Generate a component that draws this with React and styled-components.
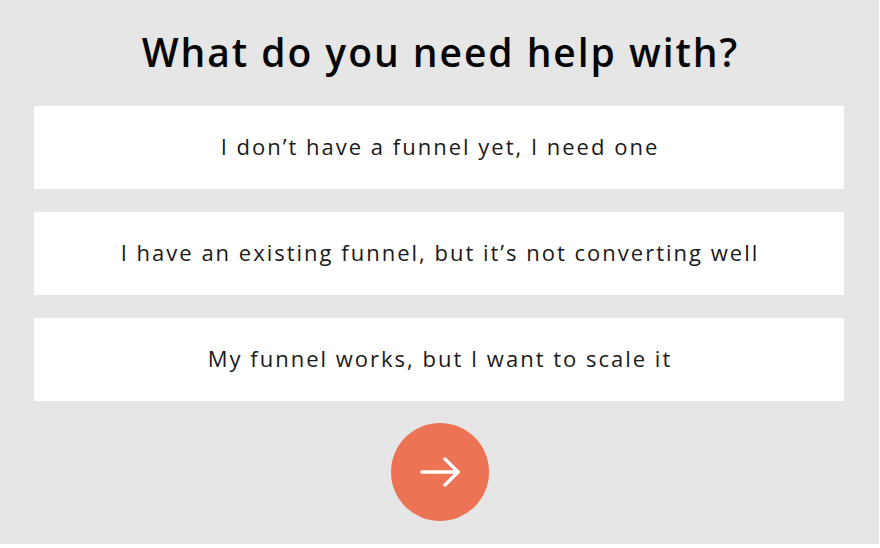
import React from "react";
import styled, { createGlobalStyle } from "styled-components";

const Global = createGlobalStyle`
  html, body { margin: 0; padding: 0; background: #ffffff; }
  * { box-sizing: border-box; }
`;

const Panel = styled.div`
  width: 879px;
  height: 544px;
  background: #e6e6e6;
  padding: 27px 35px 0 34px;
  display: flex;
  flex-direction: column;
  align-items: stretch;
  font-family: "Open Sans", "Noto Sans", sans-serif;
  color: #111111;
`;

const Title = styled.h1`
  margin: 0 0 29px;
  height: 50px;
  line-height: 50px;
  text-align: center;
  font-size: 39px;
  font-weight: 600;
  letter-spacing: 1.95px;
  padding-left: 3px;
  color: #050505;
`;

const Options = styled.div`
  display: flex;
  flex-direction: column;
  gap: 23px;
`;

const Option = styled.button`
  height: 83px;
  border: none;
  background: #ffffff;
  font-family: inherit;
  font-size: 22px;
  font-weight: 400;
  letter-spacing: 2px;
  color: #1a1a1a;
  cursor: pointer;
  display: flex;
  align-items: center;
  justify-content: center;
  padding: 0 0 3px 2px;
`;

const NextButton = styled.button`
  align-self: center;
  margin-top: 22px;
  margin-left: 1px;
  width: 98px;
  height: 98px;
  border-radius: 50%;
  border: none;
  background: #ec7353;
  display: flex;
  align-items: center;
  justify-content: center;
  cursor: pointer;
`;

const options = [
  "I don’t have a funnel yet, I need one",
  "I have an existing funnel, but it’s not converting well",
  "My funnel works, but I want to scale it",
];

export default function App() {
  return (
    <>
      <Global />
      <Panel>
        <Title>What do you need help with?</Title>
        <Options>
          {options.map((o) => (
            <Option key={o}>{o}</Option>
          ))}
        </Options>
        <NextButton aria-label="Next">
          <svg width="40" height="40" viewBox="0 0 40 40" fill="none" stroke="#fff" strokeWidth="3.4" strokeLinecap="round" strokeLinejoin="round">
            <path d="M2 20h36" />
            <path d="M25 7l13 13-13 13" />
          </svg>
        </NextButton>
      </Panel>
    </>
  );
}
